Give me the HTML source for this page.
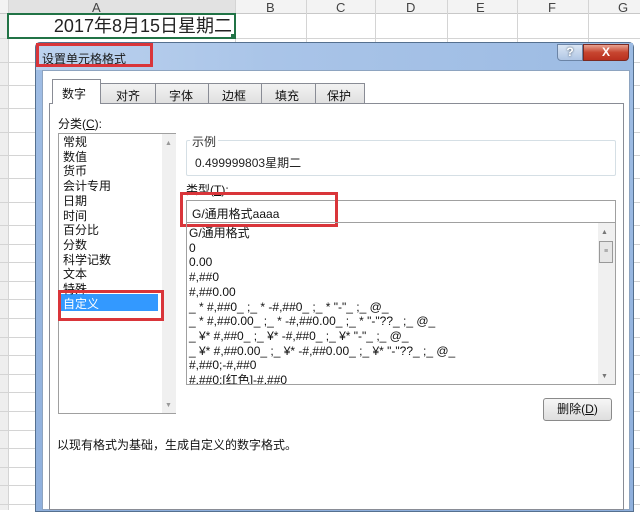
<!DOCTYPE html>
<html><head><meta charset="utf-8"><style>
*{margin:0;padding:0;box-sizing:border-box}
body{width:640px;height:510px;overflow:hidden;background:#fff;position:relative;font-family:"Liberation Sans","Noto Sans CJK SC",sans-serif;font-size:12px;color:#111}
.a{position:absolute}
.hl{position:absolute;left:0;width:640px;height:1px;background:#d4d4d4}
.vl{position:absolute;top:0;width:1px;height:510px;background:#d4d4d4}
.ch{position:absolute;top:0;font-size:13px;color:#444}
.red{position:absolute;border:3px solid #d9353a}
.it{position:absolute;left:4px;line-height:14.7px;white-space:nowrap}
</style></head><body>
<div class="a" style="left:0;top:0;width:640px;height:14px;background:#f3f3f3;border-bottom:1px solid #c8c8c8"></div>
<div class="a" style="left:8px;top:0;width:227px;height:14px;background:#e2e2e2"></div>
<div class="a" style="left:0;top:14px;width:8px;height:496px;background:#eee"></div>
<div class="ch" style="left:92px">A</div><div class="ch" style="left:266px">B</div><div class="ch" style="left:336px">C</div><div class="ch" style="left:406px">D</div><div class="ch" style="left:476px">E</div><div class="ch" style="left:548px">F</div><div class="ch" style="left:618px">G</div>
<div class="vl" style="left:8px"></div><div class="vl" style="left:235px;height:42px"></div><div class="vl" style="left:306px;height:42px"></div><div class="vl" style="left:375px;height:42px"></div><div class="vl" style="left:447px;height:42px"></div><div class="vl" style="left:517px;height:42px"></div><div class="vl" style="left:588px;height:42px"></div>
<div class="hl" style="top:38px"></div><div class="hl" style="top:62px"></div><div class="hl" style="top:85px"></div><div class="hl" style="top:108px"></div><div class="hl" style="top:132px"></div><div class="hl" style="top:155px"></div><div class="hl" style="top:178px"></div><div class="hl" style="top:202px"></div><div class="hl" style="top:225px"></div><div class="hl" style="top:244px"></div><div class="hl" style="top:262px"></div><div class="hl" style="top:281px"></div><div class="hl" style="top:299px"></div><div class="hl" style="top:318px"></div><div class="hl" style="top:337px"></div><div class="hl" style="top:355px"></div><div class="hl" style="top:374px"></div><div class="hl" style="top:392px"></div><div class="hl" style="top:411px"></div><div class="hl" style="top:430px"></div><div class="hl" style="top:448px"></div><div class="hl" style="top:467px"></div><div class="hl" style="top:485px"></div><div class="hl" style="top:504px"></div>
<div class="a" style="left:7px;top:13px;width:229px;height:26px;border:2px solid #217346;background:#fff"></div>
<div class="a" style="left:20px;top:13px;width:212px;height:26px;text-align:right;font-size:18px;line-height:26px;color:#222">2017年8月15日星期二</div>
<div class="a" style="left:231px;top:34px;width:5px;height:5px;background:#217346"></div>
<!-- dialog -->
<div class="a" style="left:35px;top:42px;width:599px;height:470px;background:linear-gradient(180deg,#c5d8ef,#9fbde4 20px,#8fb0dd);border:1px solid #55708f;border-radius:5px 5px 0 0"></div>
<div class="a" style="left:36px;top:43px;width:597px;height:27px;background:linear-gradient(90deg,#bcd2ee,#a9c4e8 40%,#9cbbe3)"></div>
<div class="a" style="left:42px;top:50px;font-size:12px;color:#1a1a1a">设置单元格格式</div>
<div class="red" style="left:36px;top:43px;width:117px;height:24px"></div>
<div class="a" style="left:557px;top:44px;width:26px;height:17px;border:1px solid #6b84a6;border-radius:0 0 0 4px;background:linear-gradient(#dbe6f4,#b0c6e4);text-align:center;color:#fff;font-weight:bold;font-size:12px;text-shadow:0 0 2px #345">?</div>
<div class="a" style="left:583px;top:44px;width:46px;height:17px;border:1px solid #7a2a22;border-radius:0 0 4px 0;background:linear-gradient(#e8a291,#c7452f 50%,#b9301f);text-align:center;color:#fff;font-weight:bold;font-size:12px">X</div>
<div class="a" style="left:42px;top:70px;width:588px;height:440px;background:#fff;border:1px solid #8ea4c0"></div>
<!-- tabs -->
<div class="a" style="left:49px;top:103px;width:575px;height:407px;border:1px solid #898c95;background:#fff"></div>
<div class="a" style="left:100px;top:83px;width:265px;height:21px;background:linear-gradient(#f2f2f2,#e0e0e0);border:1px solid #898c95"></div>
<div class="a" style="left:155px;top:83px;width:1px;height:20px;background:#898c95"></div>
<div class="a" style="left:208px;top:83px;width:1px;height:20px;background:#898c95"></div>
<div class="a" style="left:261px;top:83px;width:1px;height:20px;background:#898c95"></div>
<div class="a" style="left:315px;top:83px;width:1px;height:20px;background:#898c95"></div>
<div class="a" style="left:52px;top:79px;width:49px;height:25px;background:#fff;border:1px solid #898c95;border-bottom:none"></div>
<div class="a" style="left:62px;top:85px">数字</div>
<div class="a" style="left:116px;top:87px">对齐</div>
<div class="a" style="left:169px;top:87px">字体</div>
<div class="a" style="left:222px;top:87px">边框</div>
<div class="a" style="left:275px;top:87px">填充</div>
<div class="a" style="left:327px;top:87px">保护</div>
<div class="a" style="left:58px;top:115px">分类(<u>C</u>):</div>
<div class="a" style="left:58px;top:133px;width:118px;height:281px;border:1px solid #a0a0a0">
<div class="a" style="left:103px;top:0;width:14px;height:279px;background:#f0f0f0"></div>
<div class="a" style="left:106px;top:6px;font-size:7px;color:#999">▲</div>
<div class="a" style="left:106px;top:268px;font-size:7px;color:#999">▼</div>
<div class="a" style="left:1px;top:160px;width:98px;height:17px;background:#3399ff"></div>
<div class="it" style="top:1px">常规<br>数值<br>货币<br>会计专用<br>日期<br>时间<br>百分比<br>分数<br>科学记数<br>文本<br>特殊<br><span style="color:#fff">自定义</span></div>
</div>
<div class="red" style="left:58px;top:290px;width:106px;height:31px"></div>
<div class="a" style="left:186px;top:140px;width:430px;height:36px;border:1px solid #d5dfe5;border-radius:2px"></div>
<div class="a" style="left:190px;top:133px;background:#fff;padding:0 2px;color:#333">示例</div>
<div class="a" style="left:195px;top:154px;color:#222">0.499999803星期二</div>
<div class="a" style="left:186px;top:181px">类型(<u>T</u>):</div>
<div class="a" style="left:186px;top:200px;width:430px;height:23px;border:1px solid #a0a0a0;padding:4px 0 0 5px">G/通用格式aaaa</div>
<div class="red" style="left:180px;top:192px;width:158px;height:35px"></div>
<div class="a" style="left:186px;top:222px;width:430px;height:163px;border:1px solid #a0a0a0;overflow:hidden">
<div class="a" style="left:411px;top:0;width:17px;height:161px;background:#f0f0f0"></div>
<div class="a" style="left:414px;top:6px;font-size:7px;color:#777">▲</div>
<div class="a" style="left:412px;top:18px;width:14px;height:22px;border:1px solid #999;background:#e6e6e6;font-size:7px;text-align:center;line-height:20px;color:#777">≡</div>
<div class="a" style="left:414px;top:150px;font-size:7px;color:#777">▼</div>
<div class="it" style="left:2px;top:3px;font-family:'Liberation Sans','Noto Sans CJK SC',sans-serif">G/通用格式<br>0<br>0.00<br>#,##0<br>#,##0.00<br>_ * #,##0_ ;_ * -#,##0_ ;_ * "-"_ ;_ @_<br>_ * #,##0.00_ ;_ * -#,##0.00_ ;_ * "-"??_ ;_ @_<br>_ ¥* #,##0_ ;_ ¥* -#,##0_ ;_ ¥* "-"_ ;_ @_<br>_ ¥* #,##0.00_ ;_ ¥* -#,##0.00_ ;_ ¥* "-"??_ ;_ @_<br>#,##0;-#,##0<br>#,##0;[红色]-#,##0</div>
</div>
<div class="a" style="left:543px;top:398px;width:69px;height:23px;border:1px solid #8a8a8a;border-radius:3px;background:linear-gradient(#f6f6f6,#dedede);text-align:center;line-height:21px">删除(<u>D</u>)</div>
<div class="a" style="left:57px;top:436px">以现有格式为基础，生成自定义的数字格式。</div>
</body></html>
